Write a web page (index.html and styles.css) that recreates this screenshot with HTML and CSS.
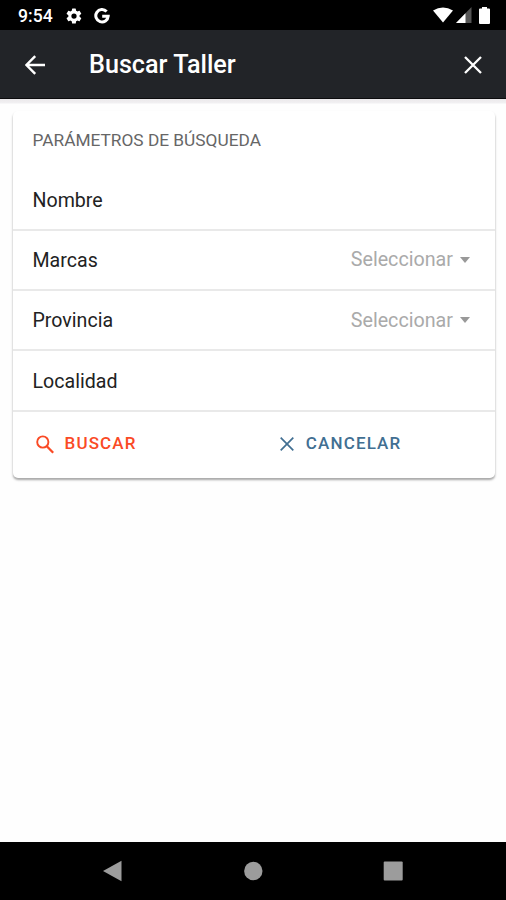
FILE: index.html
```html
<!DOCTYPE html>
<html lang="es">
<head>
    <meta charset="UTF-8">
    <meta name="viewport" content="width=device-width, initial-scale=1.0">
    <title>Buscar Taller</title>
    <link rel="stylesheet" href="styles.css">
</head>
<body>
    <div class="status-bar">
        <span class="clock">9:54</span>
        <svg class="icon-gear" width="18" height="18" viewBox="0 0 24 24" fill="#fff"><path d="M19.4 13a7.500 7.500 0 0 0 0-2l2.100-1.600a.5.5 0 0 0 .1-.6l-2-3.500a.5.5 0 0 0-.6-.2l-2.500 1a7.300 7.300 0 0 0-1.700-1l-.4-2.600a.5.5 0 0 0-.5-.5h-4a.5.5 0 0 0-.5.500L9 5.100a7.700 7.700 0 0 0-1.700 1l-2.500-1a.5.5 0 0 0-.6.200l-2 3.500a.5.5 0 0 0 .1.600L4.500 11a7.500 7.500 0 0 0 0 2l-2.200 1.600a.5.5 0 0 0-.1.600l2 3.500c.1.200.4.300.6.200l2.500-1a7.300 7.300 0 0 0 1.700 1l.4 2.600c0 .3.200.5.500.5h4c.3 0 .5-.2.500-.5l.4-2.600a7.700 7.700 0 0 0 1.700-1l2.500 1c.2.100.5 0 .6-.2l2-3.500a.5.5 0 0 0-.1-.6zM12 15.500a3.500 3.500 0 1 1 0-7 3.500 3.500 0 0 1 0 7z"/></svg>
        <svg class="icon-google" width="16" height="16" viewBox="0 0 16 16" fill="none" stroke="#fff" stroke-width="3"><path d="M12.600 3.600A6.200 6.200 0 1 0 14.200 8.200H8.200"/></svg>
        <div class="status-right">
            <svg width="20" height="17" viewBox="0 0 20 17" fill="#fff"><path d="M0 3.500Q10-2.500 20 3.500L10 15.500z"/></svg>
            <svg class="icon-signal" width="16" height="16" viewBox="0 0 16 16"><path d="M15.500 0v16H0z" fill="#555"/><path d="M9.500 6.200V16H0z" fill="#fff"/></svg>
            <svg class="icon-battery" width="11" height="17" viewBox="0 0 11 17" fill="#fff"><path d="M3 0h5v1.500h2q1 0 1 1V16q0 1-1 1H1q-1 0-1-1V2.500q0-1 1-1h2z"/></svg>
        </div>
    </div>

    <header class="toolbar">
        <svg width="21" height="20" viewBox="0 0 21 20" fill="none" stroke="#fff" stroke-width="2.400"><path d="M20 10H1.500M10.200 1.200L1.400 10l8.800 8.800"/></svg>
        <h1>Buscar Taller</h1>
        <svg class="close" width="18" height="18" viewBox="0 0 18 18" stroke="#fff" stroke-width="2.300"><path d="M1 1l16 16M17 1L1 17"/></svg>
    </header>

    <main class="content">
        <div class="card">
            <div class="card-header">PARÁMETROS DE BÚSQUEDA</div>
            <div class="item">
                <span class="label">Nombre</span>
            </div>
            <div class="item">
                <span class="label">Marcas</span>
                <span class="select">Seleccionar <i class="caret"></i></span>
            </div>
            <div class="item">
                <span class="label">Provincia</span>
                <span class="select">Seleccionar <i class="caret"></i></span>
            </div>
            <div class="item">
                <span class="label">Localidad</span>
            </div>
            <div class="actions">
                <a href="#" class="btn btn-search">
                    <svg width="18" height="19" viewBox="0 0 18 19" fill="none" stroke="currentColor" stroke-width="1.900"><circle cx="6.800" cy="7" r="5.600"/><path d="M10.800 11.200l6.400 6.600" stroke-width="2.300"/></svg>
                    <span>BUSCAR</span>
                </a>
                <a href="#" class="btn btn-cancel">
                    <svg width="14" height="14" viewBox="0 0 14 14" stroke="currentColor" stroke-width="1.700"><path d="M.7.700l12.600 12.600M13.300.700L.7 13.300"/></svg>
                    <span>CANCELAR</span>
                </a>
            </div>
        </div>
    </main>

    <nav class="nav-bar">
        <svg width="20" height="22" viewBox="0 0 20 22" fill="#9c9c9c"><path d="M0 11L18.500.700v20.600z"/></svg>
        <svg width="20" height="20" viewBox="0 0 20 20" fill="#9c9c9c"><circle cx="10.300" cy="10" r="9.200"/></svg>
        <svg width="20" height="20" viewBox="0 0 20 20" fill="#9c9c9c"><rect x=".7" y=".5" width="19" height="19" rx="1"/></svg>
    </nav>
</body>
</html>
```
FILE: styles.css
```css
* {
    margin: 0;
    padding: 0;
    box-sizing: border-box;
}

body {
    font-family: Roboto, sans-serif;
    background: #fefefe;
    height: 100vh;
    display: flex;
    flex-direction: column;
    color: #222;
    overflow: hidden;
}

svg {
    display: block;
    flex: none;
}

.status-bar {
    height: 30px;
    background: #000;
    color: #fff;
    display: flex;
    align-items: center;
    padding: 1px 16px 0 18px;
}

.clock {
    width: 47px;
    font-size: 17.6px;
    font-weight: 500;
}

.icon-google {
    margin-left: 11px;
}

.status-right {
    display: flex;
    margin-left: auto;
}

.icon-signal {
    margin-left: 3px;
}

.icon-battery {
    margin-left: 7px;
}

.toolbar {
    height: 69px;
    background: #222428;
    color: #fff;
    display: flex;
    align-items: center;
    padding: 1px 24px 0 25px;
    border-bottom: 1px solid #0c0c0e;
}

.toolbar h1 {
    margin-left: 43px;
    font-size: 25.2px;
    font-weight: 500;
}

.close {
    margin-left: auto;
}

.content {
    flex: 1;
    padding: 12px 11px 0 12.500px;
    background: linear-gradient(#ebe9eb, #f1f0f2 4px, #fefefe 5px);
}

.card {
    height: 367px;
    border-radius: 5px;
    background: #fff;
    box-shadow: 0 2px 2px rgba(0,0,0,0.25), 0 2px 3px rgba(0,0,0,0.12);
}

.card-header {
    height: 59.500px;
    padding: 18px 20px 0;
    font-size: 17.3px;
    line-height: 22px;
    color: #666;
}

.item {
    height: 60.300px;
    padding: 0 25px 0 20px;
    display: flex;
    align-items: center;
    justify-content: space-between;
    border-bottom: 2px solid #e9e9e9;
}

.label {
    font-size: 19.6px;
    padding-top: 1px;
}

.select {
    display: flex;
    align-items: center;
    font-size: 19.7px;
    color: #aaa;
}

.caret {
    margin-left: 7px;
    border: 5.500px solid transparent;
    border-top: 6px solid #999;
    border-bottom: 0;
}

.actions {
    display: grid;
    grid-template-columns: 1fr 1fr;
    height: 63px;
    align-items: center;
}

.btn {
    display: flex;
    align-items: center;
    font-size: 17px;
    font-weight: 500;
    letter-spacing: 1.150px;
    text-decoration: none;
}

.btn svg {
    margin-top: 2px;
}

.btn-search {
    padding-left: 23px;
    gap: 11px;
    color: #fa4a25;
}

.btn-cancel {
    padding-left: 26px;
    gap: 12px;
    color: #416f92;
}

.nav-bar {
    height: 58px;
    background: #000;
    display: flex;
    align-items: center;
    justify-content: space-between;
    padding: 0 103px;
}
```
